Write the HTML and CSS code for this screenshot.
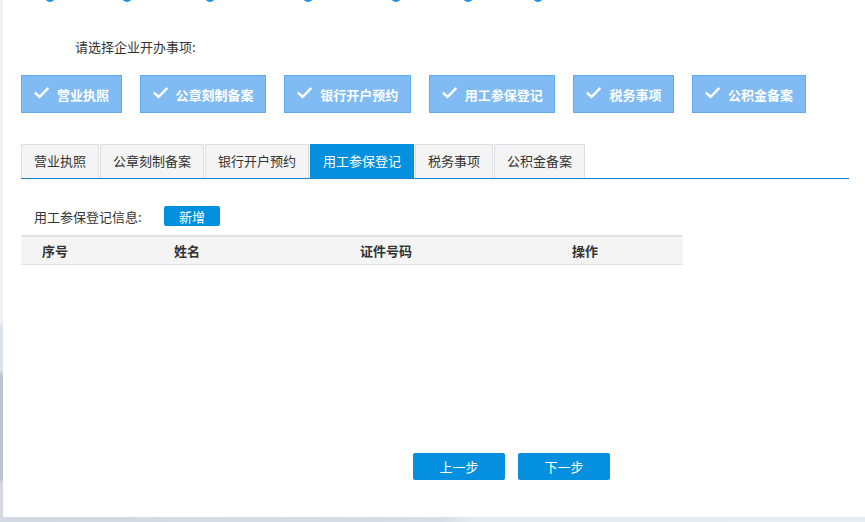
FILE: index.html
```html
<!DOCTYPE html>
<html lang="zh-CN">
<head>
<meta charset="utf-8">
<title>企业开办</title>
<link rel="stylesheet" href="styles.css">
</head>
<body>
<div class="screen">
  <div class="side"></div>
  <div class="panel">
    <div class="steps">
      <span class="dot s1"></span>
      <span class="dot s2"></span>
      <span class="dot s3"></span>
      <span class="dot s4"></span>
      <span class="dot s5"></span>
      <span class="dot s6"></span>
      <span class="dot s7"></span>
    </div>
    <p class="prompt">请选择企业开办事项:</p>
    <div class="choices">
      <button class="choice"><svg class="check" viewBox="0 0 15 12" width="15" height="12"><path d="M1.5 6.2 L5.6 10 L13.6 1.6" /></svg>营业执照</button>
      <button class="choice"><svg class="check" viewBox="0 0 15 12" width="15" height="12"><path d="M1.5 6.2 L5.6 10 L13.6 1.6" /></svg>公章刻制备案</button>
      <button class="choice"><svg class="check" viewBox="0 0 15 12" width="15" height="12"><path d="M1.5 6.2 L5.6 10 L13.6 1.6" /></svg>银行开户预约</button>
      <button class="choice"><svg class="check" viewBox="0 0 15 12" width="15" height="12"><path d="M1.5 6.2 L5.6 10 L13.6 1.6" /></svg>用工参保登记</button>
      <button class="choice"><svg class="check" viewBox="0 0 15 12" width="15" height="12"><path d="M1.5 6.2 L5.6 10 L13.6 1.6" /></svg>税务事项</button>
      <button class="choice"><svg class="check" viewBox="0 0 15 12" width="15" height="12"><path d="M1.5 6.2 L5.6 10 L13.6 1.6" /></svg>公积金备案</button>
    </div>
    <div class="tabs">
      <div class="tab">营业执照</div>
      <div class="tab">公章刻制备案</div>
      <div class="tab">银行开户预约</div>
      <div class="tab active">用工参保登记</div>
      <div class="tab">税务事项</div>
      <div class="tab">公积金备案</div>
    </div>
    <div class="info">
      <span class="info-label">用工参保登记信息:</span>
      <button class="add">新增</button>
    </div>
    <div class="table">
      <div class="thead">
        <div class="th c1">序号</div>
        <div class="th c2">姓名</div>
        <div class="th c3">证件号码</div>
        <div class="th c4">操作</div>
      </div>
    </div>
    <div class="nav">
      <button class="navbtn">上一步</button>
      <button class="navbtn">下一步</button>
    </div>
  </div>
  <div class="bottom"></div>
</div>
</body>
</html>
```
FILE: styles.css
```css
html, body {
  margin: 0;
  padding: 0;
  background: #ffffff;
}
body {
  font-family: "Noto Sans CJK SC", "Noto Sans", sans-serif;
  font-size: 13px;
  color: #333333;
}
.screen {
  width: 865px;
  height: 522px;
  display: grid;
  grid-template-columns: 3px 862px;
  grid-template-rows: 517px 5px;
  overflow: hidden;
}
.side {
  background: linear-gradient(to bottom, #eef2f6 0px, #eef2f6 322px, #dde3ea 328px, #dde3ea 370px, #bac3cf 376px, #bac3cf 478px, #d3d8e1 484px, #d3d8e1 517px);
}
.panel {
  background: #ffffff;
  padding-left: 18px;
  overflow: hidden;
}
.bottom {
  grid-column: 1 / 3;
  background: linear-gradient(to right, #d3d8e1 0px, #d8dde5 440px, #e6ebf0 470px, #e8edf2 865px);
}
.steps {
  display: flex;
  height: 2px;
  overflow: hidden;
}
.dot {
  flex: none;
  width: 10px;
  height: 10px;
  border-radius: 50%;
  background: #1a8fe3;
  margin-top: -8px;
}
.s1 { margin-left: 24px; }
.s2 { margin-left: 67px; }
.s3 { margin-left: 73px; }
.s4 { margin-left: 88px; }
.s5 { margin-left: 78px; }
.s6 { margin-left: 62px; }
.s7 { margin-left: 60px; }
.prompt {
  margin: 35px 0 0 0;
  padding-left: 54px;
  line-height: 20px;
  height: 20px;
  color: #333333;
}
.choices {
  display: flex;
  gap: 18px;
  margin-top: 18px;
}
.choice {
  display: flex;
  align-items: center;
  height: 38px;
  padding: 0 11.6px 0 12px;
  border: 1px solid #62aaef;
  background: #80bbf3;
  color: #ffffff;
  font-family: inherit;
  font-size: 13px;
  font-weight: bold;
  cursor: pointer;
}
.check {
  flex: none;
  margin-right: 8px;
  margin-top: -2px;
}
.check path {
  fill: none;
  stroke: #ffffff;
  stroke-width: 2.4;
  stroke-linecap: round;
  stroke-linejoin: round;
}
.tabs {
  display: flex;
  align-items: flex-end;
  width: 828px;
  margin-top: 31px;
  border-bottom: 1px solid #1a80cc;
}
.tab {
  height: 33px;
  line-height: 32px;
  padding: 0 12px;
  margin-right: 1px;
  border: 1px solid #dcdfe3;
  border-bottom: none;
  background: #f4f4f4;
  color: #333333;
  white-space: nowrap;
}
.tab.active {
  background: #0590df;
  border-color: #0590df;
  color: #ffffff;
}
.info {
  display: flex;
  align-items: center;
  height: 20px;
  margin-top: 27px;
  padding-left: 13px;
}
.info-label {
  display: inline-block;
  width: 117px;
  white-space: nowrap;
  color: #333333;
}
.add {
  margin-left: 13px;
  width: 56px;
  height: 20px;
  padding: 0;
  border: none;
  border-radius: 2px;
  background: #0090e0;
  color: #ffffff;
  font-family: inherit;
  font-size: 13px;
}
.table {
  width: 662px;
  margin-top: 9px;
  border-top: 2px solid #e0e3e7;
}
.thead {
  display: grid;
  grid-template-columns: 132px 140px 192px 198px;
  height: 27px;
  align-items: center;
  background: #f4f4f4;
  border-bottom: 1px solid #e3e3e3;
}
.th {
  font-weight: bold;
  color: #333333;
}
.c1, .c2 {
  padding-left: 21px;
}
.c3 {
  text-align: center;
  padding-right: 6px;
}
.c4 {
  text-align: center;
  padding-left: 2px;
}
.nav {
  display: flex;
  gap: 13px;
  margin-top: 188px;
  padding-left: 392px;
}
.navbtn {
  width: 92px;
  height: 27px;
  padding: 0;
  border: none;
  border-radius: 2px;
  background: #0590df;
  color: #ffffff;
  font-family: inherit;
  font-size: 13px;
}
```
